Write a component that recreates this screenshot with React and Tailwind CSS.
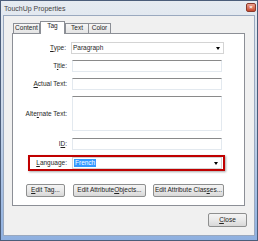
import React from "react";

const Label = ({ children, className = "" }) => (
  <div className={`shrink-0 text-right pr-[5px] ${className}`}>{children}</div>
);

const TextBox = ({ className = "" }) => (
  <div
    className={`w-[150px] bg-white border border-[#e3e9ef] border-t-[#8a8a8a] ${className}`}
  />
);

const Select = ({ children, className = "" }) => (
  <div
    className={`flex items-center h-[12px] bg-white border border-[#d4d4d4] pl-[1px] pr-[3px] ${className}`}
  >
    <div className="flex-1 flex items-center">{children}</div>
    <div className="w-0 h-0 border-l-[2px] border-r-[2px] border-t-[3px] border-l-transparent border-r-transparent border-t-black" />
  </div>
);

const Button = ({ children, className = "" }) => (
  <div
    className={`h-[13px] flex items-center justify-center rounded-[2px] border border-[#8e8f8f] bg-gradient-to-b from-[#f4f4f4] via-[#e9e9e9] to-[#d8d8d8] text-[#222] ${className}`}
  >
    {children}
  </div>
);

const Tab = ({ children, active, className = "" }) =>
  active ? (
    <div
      className={`relative z-10 h-[13px] -mb-[1px] bg-white border border-b-0 border-[#8c8f96] flex items-start pt-[1px] justify-center ${className}`}
    >
      {children}
    </div>
  ) : (
    <div
      className={`h-[10px] bg-gradient-to-b from-[#f6f6f6] to-[#e4e4e4] border border-b-0 border-[#8c8f96] flex items-center justify-center ${className}`}
    >
      {children}
    </div>
  );

export default function App() {
  return (
    <div
      className="w-[258px] h-[241px] flex flex-col border border-[#4b5d7a] bg-gradient-to-b from-[#e6ebf1] via-[#c7d5e8] to-[#8fb0e0] text-[6.5px] leading-none text-[#1e1e1e]"
      style={{ fontFamily: '"Liberation Sans", Arial, sans-serif' }}
    >
      <div className="h-[14px] flex items-center pl-[3px] pr-[1px]">
        <span className="text-[7px] text-[#444]">TouchUp Properties</span>
        <div className="ml-auto mt-[-2px] w-[10px] h-[9px] rounded-[2px] border border-[#8a3a2c] bg-gradient-to-b from-[#eba08e] to-[#c7462a] flex items-center justify-center text-white text-[6px] font-bold">
          ×
        </div>
      </div>
      <div className="flex-1 mx-[2px] mb-[4px] border border-[#9aa9bf] bg-[#f0f0f0] flex flex-col">
        <div className="flex items-end ml-[9px] mt-[4px] h-[13px]">
          <Tab className="w-[27px]">Content</Tab>
          <Tab active className="w-[25px]">
            Tag
          </Tab>
          <Tab className="w-[24px]">Text</Tab>
          <Tab className="w-[23px] -ml-[1px]">Color</Tab>
        </div>
        <div className="ml-[8px] w-[233px] h-[173px] bg-white border border-[#8c8f96] flex flex-col">
          <div className="flex items-center h-[12px] mt-[8px]">
            <Label className="w-[58px]">
              <u>T</u>ype:
            </Label>
            <Select className="w-[153px]">Paragraph</Select>
          </div>
          <div className="flex items-center h-[12px] mt-[6px]">
            <Label className="w-[59px]">
              T<u>i</u>tle:
            </Label>
            <TextBox className="h-[12px]" />
          </div>
          <div className="flex items-center h-[12px] mt-[6px]">
            <Label className="w-[59px]">
              <u>A</u>ctual Text:
            </Label>
            <TextBox className="h-[12px]" />
          </div>
          <div className="flex items-center h-[35px] mt-[6px]">
            <Label className="w-[59px] self-center mt-[1px]">
              Alte<u>r</u>nate Text:
            </Label>
            <TextBox className="h-[35px]" />
          </div>
          <div className="flex items-center h-[12px] mt-[7px]">
            <Label className="w-[59px]">
              I<u>D</u>:
            </Label>
            <TextBox className="h-[12px]" />
          </div>
          <div className="ml-[15px] w-[197px] h-[16px] mt-[5px] border-2 border-[#c00000] flex items-center shadow-[1px_1px_2px_rgba(0,0,0,0.35)]">
            <Label className="w-[42px]">
              <u>L</u>anguage:
            </Label>
            <Select className="w-[150px] h-[11px]">
              <span className="bg-[#3399ff] text-white px-[1px] py-[1px]">French</span>
            </Select>
          </div>
          <div className="flex mt-[13px] ml-[13px]">
            <Button className="w-[39px]">
              <u>E</u>dit Tag...
            </Button>
            <Button className="w-[73px] ml-[8px]">
              Edit Attribute <u>O</u>bjects...
            </Button>
            <Button className="w-[71px] ml-[7px]">
              Edit Attribute Clas<u>s</u>es...
            </Button>
          </div>
        </div>
        <div className="flex justify-end mt-[7px] mr-[7px]">
          <Button className="w-[39px] h-[14px]">
            <u>C</u>lose
          </Button>
        </div>
      </div>
    </div>
  );
}
